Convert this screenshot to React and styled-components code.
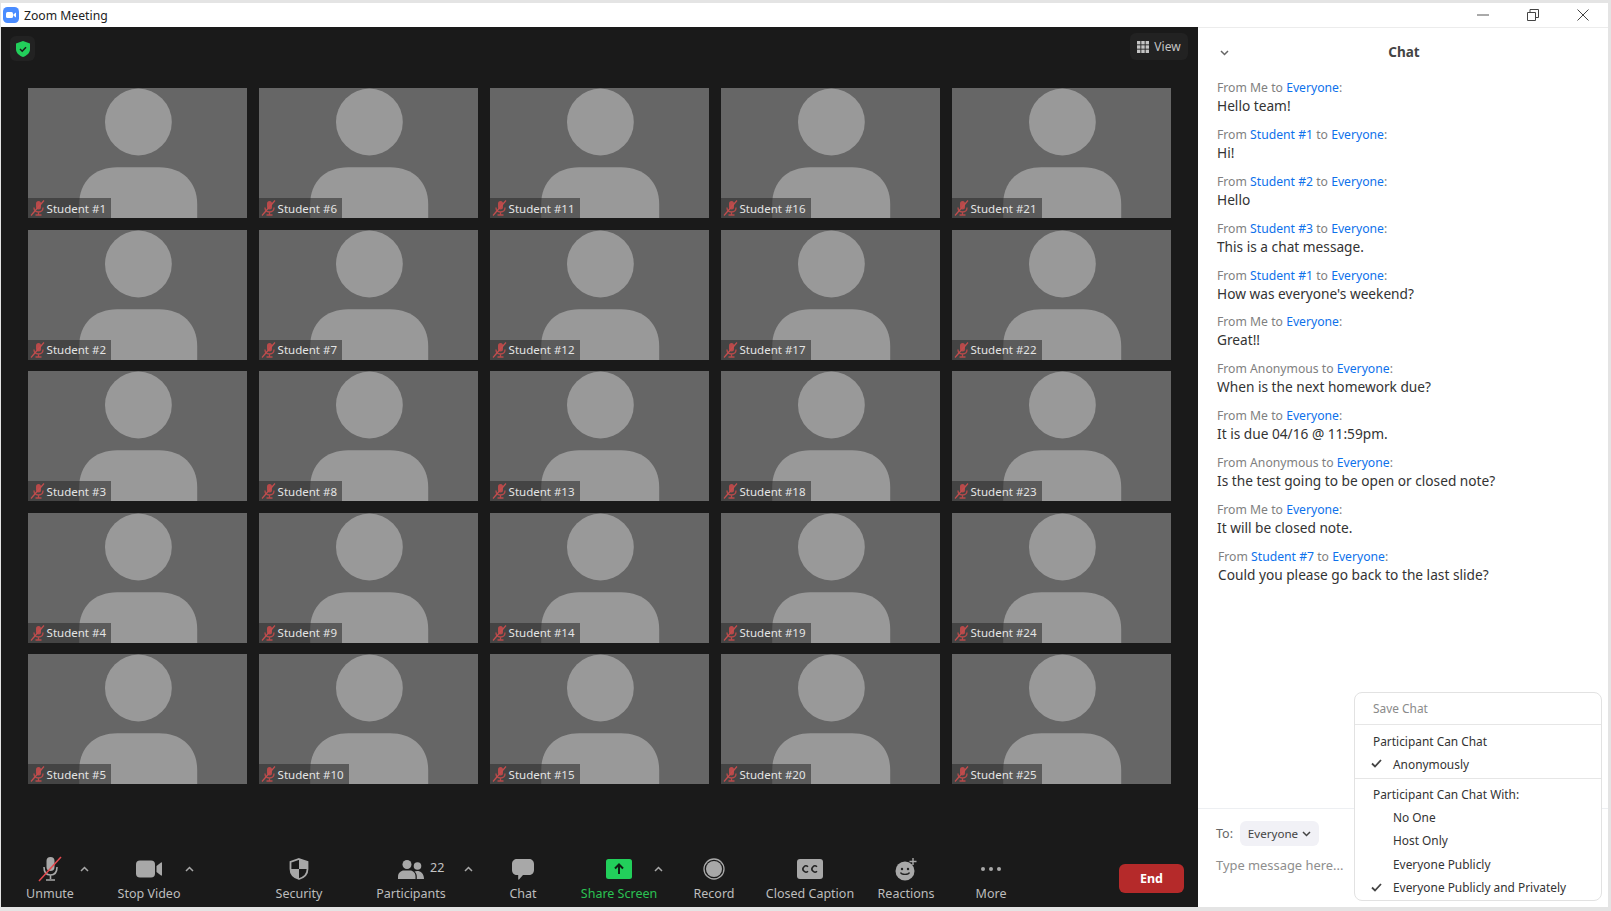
import React from 'react';
import styled, { createGlobalStyle } from 'styled-components';

const GlobalStyle = createGlobalStyle`
  html, body {
    margin: 0;
    padding: 0;
    background: #e6e6e6;
  }
  body {
    font-family: "Noto Sans", "Liberation Sans", sans-serif;
  }
`;

const Window = styled.div`
  width: 1611px;
  height: 911px;
  box-sizing: border-box;
  padding: 3px 3px 4px 1px;
  display: flex;
  flex-direction: column;
  background: #e4e4e4;
  overflow: hidden;
`;

const TitleBar = styled.header`
  height: 24px;
  flex: none;
  display: flex;
  align-items: center;
  background: #fff;
  padding-left: 2px;
  color: #222;
  font-size: 12.2px;
`;

const TitleText = styled.span`
  flex: 1;
  margin-left: 5px;
`;

const WindowControl = styled.span`
  width: 50px;
  height: 24px;
  display: flex;
  align-items: center;
  justify-content: center;
`;

const Body = styled.div`
  flex: 1;
  min-height: 0;
  display: flex;
`;

const Stage = styled.main`
  width: 1197px;
  flex: none;
  display: flex;
  flex-direction: column;
  background: #1a1a1a;
`;

const StageTop = styled.div`
  height: 61px;
  flex: none;
  box-sizing: border-box;
  padding: 6px 10px 0 9px;
  display: flex;
  justify-content: space-between;
  align-items: flex-start;
`;

const ShieldBadge = styled.div`
  width: 25px;
  height: 25px;
  margin-top: 3px;
  border-radius: 6px;
  background: #222;
  display: flex;
  align-items: center;
  justify-content: center;
`;

const ViewButton = styled.div`
  height: 27px;
  width: 58px;
  box-sizing: border-box;
  border-radius: 6px;
  background: #222;
  color: #c4c4c4;
  font-size: 12px;
  display: flex;
  align-items: center;
  justify-content: center;
  gap: 5px;
`;

const TileGrid = styled.section`
  margin-left: 26.6px;
  display: grid;
  grid-auto-flow: column;
  grid-template-columns: repeat(5, 219.3px);
  grid-template-rows: repeat(5, 130px);
  column-gap: 11.7px;
  row-gap: 11.6px;
`;

const Tile = styled.div`
  position: relative;
  background: #666;
  overflow: hidden;
`;

const Avatar = styled.svg`
  display: block;
  width: 100%;
  height: 100%;
`;

const NameTag = styled.div`
  position: absolute;
  left: 0;
  bottom: 0;
  height: 20px;
  box-sizing: border-box;
  padding: 0 5px 0 2px;
  display: flex;
  align-items: center;
  gap: 2px;
  background: rgba(40, 40, 40, 0.55);
  color: #e4e4e4;
  font-size: 11.5px;
  white-space: nowrap;
`;

const Toolbar = styled.footer`
  margin-top: auto;
  height: 50px;
  flex: none;
  display: flex;
  align-items: flex-start;
  padding-left: 21px;
`;

const ToolButton = styled.div`
  position: relative;
  flex: none;
  width: ${(p) => p.$width}px;
  margin-left: ${(p) => p.$offset || 0}px;
  height: 50px;
  display: flex;
  flex-direction: column;
  align-items: center;
  color: ${(p) => (p.$active ? '#2bc253' : '#bdbdbd')};
  font-size: 12.5px;
  white-space: nowrap;
`;

const ToolIcon = styled.div`
  height: 26px;
  margin-top: -1px;
  display: flex;
  align-items: center;
  justify-content: center;
`;

const ToolLabel = styled.span`
  line-height: 16px;
  margin-top: 4px;
`;

const Count = styled.span`
  position: absolute;
  left: 57px;
  top: 2px;
  line-height: 18px;
  font-size: 12.5px;
  color: #c4c4c4;
`;

const Caret = styled.div`
  flex: none;
  width: 12px;
  height: 26px;
  margin-top: -1px;
  margin-left: ${(p) => p.$offset || 0}px;
  display: flex;
  align-items: center;
  justify-content: center;
`;

const EndButton = styled.div`
  margin: 7px 14px 0 auto;
  width: 65px;
  height: 29px;
  border-radius: 6px;
  background: #b52a2a;
  color: #fff;
  font-size: 12.5px;
  font-weight: 700;
  display: flex;
  align-items: center;
  justify-content: center;
`;

const ChatPanel = styled.aside`
  position: relative;
  flex: 1;
  background: #fff;
  display: flex;
  flex-direction: column;
  border-top: 1px solid #ececec;
`;

const ChatHeader = styled.div`
  height: 50px;
  flex: none;
  position: relative;
  display: flex;
  align-items: center;
  justify-content: center;
  box-sizing: border-box;
  padding: 0 0 2px 2px;
  font-size: 13.5px;
  font-weight: 700;
  color: #444;
`;

const ChatChevron = styled.span`
  position: absolute;
  left: 22px;
  top: 22px;
  display: flex;
`;

const MessageList = styled.div`
  flex: 1;
  padding-left: 19px;
  display: flex;
  flex-direction: column;
`;

const Message = styled.div`
  height: 46.9px;
  padding-left: ${(p) => (p.$nudge ? 1 : 0)}px;
`;

const FromLine = styled.div`
  font-size: 12.2px;
  line-height: 19px;
  color: #7f7f7f;
`;

const Blue = styled.span`
  color: #0e71eb;
`;

const MessageText = styled.div`
  margin-top: -1px;
  font-size: 13.7px;
  line-height: 19px;
  color: #333;
`;

const Composer = styled.div`
  height: 99px;
  flex: none;
  box-sizing: border-box;
  border-top: 1px solid #edeff2;
  padding: 12px 0 0 18px;
  display: flex;
  flex-direction: column;
  gap: 9px;
`;

const RecipientRow = styled.div`
  display: flex;
  align-items: center;
  gap: 7px;
  font-size: 12.5px;
  color: #666;
`;

const RecipientPill = styled.div`
  height: 25px;
  width: 79px;
  box-sizing: border-box;
  border-radius: 6px;
  background: #f1f1f6;
  color: #444;
  font-size: 11.6px;
  display: flex;
  align-items: center;
  justify-content: center;
  gap: 4px;
`;

const Placeholder = styled.div`
  font-size: 12.9px;
  line-height: 20px;
  color: #8e8e8e;
`;

const Menu = styled.div`
  position: absolute;
  left: 156px;
  top: 664px;
  width: 248px;
  height: 209px;
  box-sizing: border-box;
  background: #fff;
  border: 1px solid #e2e2e2;
  border-radius: 8px;
  color: #333;
  font-size: 11.9px;
`;

const MenuSection = styled.div`
  height: ${(p) => p.$height}px;
  box-sizing: border-box;
  padding-top: ${(p) => p.$pad}px;
  border-bottom: ${(p) => (p.$last ? 'none' : '1px solid #e6e6e6')};
`;

const MenuItem = styled.div`
  height: 23.4px;
  display: flex;
  align-items: center;
  padding-left: ${(p) => (p.$indent ? 38 : 18)}px;
  color: ${(p) => (p.$muted ? '#8a8a8a' : '#333')};
  position: relative;
`;

const MenuCheck = styled.span`
  position: absolute;
  left: 16px;
  top: 7px;
  display: flex;
`;

const MutedMic = () => (
  <svg width="15" height="16" viewBox="0 0 15 16">
    <rect x="6" y="1" width="5" height="8.500" rx="2.500" fill="#b84a4a" />
    <path d="M4 7.500c0 3 2 4.500 4.500 4.500S13 10.500 13 7.500M8.500 12v2.500M5.500 15h6" fill="none" stroke="#b84a4a" strokeWidth="1.300" />
    <path d="M14 0.500 1 15.500" stroke="#c24e4e" strokeWidth="1.200" />
  </svg>
);

const AvatarPicture = () => (
  <Avatar viewBox="0 0 219.3 130" preserveAspectRatio="none">
    <circle cx="110.400" cy="34" r="33.400" fill="#999" />
    <path d="M51.200 130v-14c0-22 15-36.700 38-36.700h42c23 0 38 14.700 38 36.700v14z" fill="#999" />
  </Avatar>
);

const CaretIcon = () => (
  <svg width="9" height="6" viewBox="0 0 9 6">
    <path d="M1 5 4.500 1.500 8 5" fill="none" stroke="#a8a8a8" strokeWidth="1.500" />
  </svg>
);

const MicIcon = () => (
  <svg width="28" height="26" viewBox="0 0 28 26">
    <rect x="10.500" y="1" width="8" height="14" rx="4" fill="#a8a8a8" />
    <path d="M8 11c0 5 2.500 8 6.500 8s6.500-3 6.500-8M14.500 19v4M10 24h9" fill="none" stroke="#a8a8a8" strokeWidth="1.600" />
    <path d="M25 1 3 25" stroke="#e5484d" strokeWidth="1.500" />
  </svg>
);

const VideoIcon = () => (
  <svg width="26" height="18" viewBox="0 0 26 18">
    <rect x="0" y="0.500" width="19" height="17" rx="4" fill="#a8a8a8" />
    <path d="M20.500 6 25 2.500c.4-.3 1-.1 1 .5v12c0 .6-.6.8-1 .5L20.500 12z" fill="#a8a8a8" />
  </svg>
);

const SecurityIcon = () => (
  <svg width="20" height="22" viewBox="0 0 20 22">
    <path d="M10 1 18.500 4v7c0 5-3.500 8.500-8.500 10C5 19.500 1.500 16 1.500 11V4z" fill="none" stroke="#a8a8a8" strokeWidth="1.800" />
    <path d="M10 1 18.500 4v7H10zM10 11H1.500c0 5 3.500 8.500 8.500 10z" fill="#a8a8a8" />
  </svg>
);

const ParticipantsIcon = () => (
  <svg width="26" height="19" viewBox="0 0 26 19">
    <circle cx="9" cy="4.500" r="4.500" fill="#a8a8a8" />
    <circle cx="19.500" cy="6" r="3.800" fill="#a8a8a8" />
    <path d="M0 19v-2.500C0 13 3 10.500 6 10.500h6c3 0 5.500 2.500 5.500 6V19z" fill="#a8a8a8" />
    <path d="M18.800 19v-2.500c0-2-.8-4-2.300-5 .8-.3 1.700-.5 2.700-.5 3.500 0 6.800 2.500 6.800 8z" fill="#a8a8a8" />
  </svg>
);

const ChatIcon = () => (
  <svg width="22" height="21" viewBox="0 0 22 21">
    <path d="M5 0h12c2.800 0 5 2 5 5v6c0 3-2.200 5-5 5h-6l-4 4.500c-.3.300-.8.100-.8-.3V16H5c-2.800 0-5-2-5-5V5c0-3 2.200-5 5-5z" fill="#a8a8a8" />
  </svg>
);

const ShareIcon = () => (
  <svg width="26" height="20" viewBox="0 0 26 20">
    <rect width="26" height="20" rx="2.500" fill="#22cf5b" />
    <path d="M13 15V6M9 9.500 13 5.500l4 4" fill="none" stroke="#0f1f14" strokeWidth="2" />
  </svg>
);

const RecordIcon = () => (
  <svg width="22" height="22" viewBox="0 0 22 22">
    <circle cx="11" cy="11" r="10" fill="none" stroke="#a8a8a8" strokeWidth="1.300" />
    <circle cx="11" cy="11" r="8" fill="#a8a8a8" />
  </svg>
);

const CaptionIcon = () => (
  <svg width="26" height="20" viewBox="0 0 26 20">
    <rect width="26" height="20" rx="3" fill="#a8a8a8" />
    <path d="M11 7.800a3 3 0 1 0 0 4.400M20 7.800a3 3 0 1 0 0 4.400" fill="none" stroke="#222" strokeWidth="1.500" />
  </svg>
);

const ReactionIcon = () => (
  <svg width="22" height="24" viewBox="0 0 22 24">
    <circle cx="10" cy="14" r="9.500" fill="#a8a8a8" />
    <circle cx="7" cy="12" r="1.200" fill="#222" />
    <circle cx="13" cy="12" r="1.200" fill="#222" />
    <path d="M5.500 15.500c1 2.500 8 2.500 9 0" fill="none" stroke="#222" strokeWidth="1.300" />
    <path d="M18 1v7M14.500 4.500h7" stroke="#a8a8a8" strokeWidth="1.400" />
  </svg>
);

const MoreIcon = () => (
  <svg width="22" height="6" viewBox="0 0 22 6">
    <circle cx="3" cy="3" r="2" fill="#a8a8a8" />
    <circle cx="11" cy="3" r="2" fill="#a8a8a8" />
    <circle cx="19" cy="3" r="2" fill="#a8a8a8" />
  </svg>
);

const Check = () => (
  <svg width="11" height="9" viewBox="0 0 11 9">
    <path d="M1 4.500 4 7.500 10 1" fill="none" stroke="#444" strokeWidth="1.800" />
  </svg>
);

const Down = ({ color = '#444' }) => (
  <svg width="9" height="6" viewBox="0 0 9 6">
    <path d="M1 1 4.500 4.500 8 1" fill="none" stroke={color} strokeWidth="1.500" />
  </svg>
);

const students = Array.from({ length: 25 }, (_, i) => `Student #${i + 1}`);

const messages = [
  { from: 'Me', text: 'Hello team!' },
  { from: 'Student #1', link: true, text: 'Hi!' },
  { from: 'Student #2', link: true, text: 'Hello' },
  { from: 'Student #3', link: true, text: 'This is a chat message.' },
  { from: 'Student #1', link: true, text: "How was everyone's weekend?" },
  { from: 'Me', text: 'Great!!' },
  { from: 'Anonymous', text: 'When is the next homework due?' },
  { from: 'Me', text: 'It is due 04/16 @ 11:59pm.' },
  { from: 'Anonymous', text: 'Is the test going to be open or closed note?' },
  { from: 'Me', text: 'It will be closed note.' },
  { from: 'Student #7', link: true, nudge: true, text: 'Could you please go back to the last slide?' },
];

const App = () => {
  return (
    <Window>
      <GlobalStyle />
      <TitleBar>
        <svg width="16" height="16" viewBox="0 0 16 16">
          <rect width="16" height="16" rx="4.500" fill="#4a8cff" />
          <rect x="3" y="5" width="7" height="6" rx="1.500" fill="#fff" />
          <path d="M10.500 7.300 13 5.500v5l-2.500-1.800z" fill="#fff" />
        </svg>
        <TitleText>Zoom Meeting</TitleText>
        <WindowControl>
          <svg width="12" height="2" viewBox="0 0 12 2"><path d="M0 1h12" stroke="#555" /></svg>
        </WindowControl>
        <WindowControl>
          <svg width="12" height="12" viewBox="0 0 12 12">
            <path d="M.5 3.500h8v8h-8zM3 3.500V.500h8.500v8H8.500" fill="none" stroke="#444" />
          </svg>
        </WindowControl>
        <WindowControl>
          <svg width="12" height="12" viewBox="0 0 12 12"><path d="M.5.500l11 11M11.500.500l-11 11" stroke="#444" /></svg>
        </WindowControl>
      </TitleBar>
      <Body>
        <Stage>
          <StageTop>
            <ShieldBadge>
              <svg width="14" height="16" viewBox="0 0 14 16">
                <path d="M7 0l7 2.500v5.500c0 4-3 6.500-7 8-4-1.500-7-4-7-8V2.500z" fill="#22cf5b" />
                <path d="M4 8l2.200 2.200L10 6.200" fill="none" stroke="#1a1a1a" strokeWidth="1.500" />
              </svg>
            </ShieldBadge>
            <ViewButton>
              <svg width="12" height="12" viewBox="0 0 12 12" fill="#c4c4c4">
                {[0, 4.300, 8.600].map((y) =>
                  [0, 4.300, 8.600].map((x) => <rect key={`${x}-${y}`} x={x} y={y} width="3.400" height="3.400" />)
                )}
              </svg>
              View
            </ViewButton>
          </StageTop>
          <TileGrid>
            {students.map((name) => (
              <Tile key={name}>
                <AvatarPicture />
                <NameTag>
                  <MutedMic />
                  {name}
                </NameTag>
              </Tile>
            ))}
          </TileGrid>
          <Toolbar>
            <ToolButton $width={56}>
              <ToolIcon><MicIcon /></ToolIcon>
              <ToolLabel>Unmute</ToolLabel>
            </ToolButton>
            <Caret><CaretIcon /></Caret>
            <ToolButton $width={68} $offset={25}>
              <ToolIcon><VideoIcon /></ToolIcon>
              <ToolLabel>Stop Video</ToolLabel>
            </ToolButton>
            <Caret><CaretIcon /></Caret>
            <ToolButton $width={56} $offset={76}>
              <ToolIcon><SecurityIcon /></ToolIcon>
              <ToolLabel>Security</ToolLabel>
            </ToolButton>
            <ToolButton $width={76} $offset={46}>
              <ToolIcon><ParticipantsIcon /></ToolIcon>
              <ToolLabel>Participants</ToolLabel>
              <Count>22</Count>
            </ToolButton>
            <Caret $offset={13}><CaretIcon /></Caret>
            <ToolButton $width={40} $offset={29}>
              <ToolIcon><ChatIcon /></ToolIcon>
              <ToolLabel>Chat</ToolLabel>
            </ToolButton>
            <ToolButton $width={76} $offset={38} $active>
              <ToolIcon><ShareIcon /></ToolIcon>
              <ToolLabel>Share Screen</ToolLabel>
            </ToolButton>
            <Caret $offset={-5}><CaretIcon /></Caret>
            <ToolButton $width={50} $offset={25}>
              <ToolIcon><RecordIcon /></ToolIcon>
              <ToolLabel>Record</ToolLabel>
            </ToolButton>
            <ToolButton $width={92} $offset={25}>
              <ToolIcon><CaptionIcon /></ToolIcon>
              <ToolLabel>Closed Caption</ToolLabel>
            </ToolButton>
            <ToolButton $width={60} $offset={20}>
              <ToolIcon><ReactionIcon /></ToolIcon>
              <ToolLabel>Reactions</ToolLabel>
            </ToolButton>
            <ToolButton $width={40} $offset={35}>
              <ToolIcon><MoreIcon /></ToolIcon>
              <ToolLabel>More</ToolLabel>
            </ToolButton>
            <EndButton>End</EndButton>
          </Toolbar>
        </Stage>
        <ChatPanel>
          <ChatHeader>
            <ChatChevron><Down color="#666" /></ChatChevron>
            Chat
          </ChatHeader>
          <MessageList>
            {messages.map((m, i) => (
              <Message key={i} $nudge={m.nudge}>
                <FromLine>
                  From {m.link ? <Blue>{m.from}</Blue> : m.from} to <Blue>Everyone</Blue>:
                </FromLine>
                <MessageText>{m.text}</MessageText>
              </Message>
            ))}
          </MessageList>
          <Composer>
            <RecipientRow>
              To:
              <RecipientPill>Everyone <Down /></RecipientPill>
            </RecipientRow>
            <Placeholder>Type message here...</Placeholder>
          </Composer>
          <Menu>
            <MenuSection $height={32} $pad={3}>
              <MenuItem $muted>Save Chat</MenuItem>
            </MenuSection>
            <MenuSection $height={54} $pad={4}>
              <MenuItem>Participant Can Chat</MenuItem>
              <MenuItem $indent><MenuCheck><Check /></MenuCheck>Anonymously</MenuItem>
            </MenuSection>
            <MenuSection $height={121} $pad={3} $last>
              <MenuItem>Participant Can Chat With:</MenuItem>
              <MenuItem $indent>No One</MenuItem>
              <MenuItem $indent>Host Only</MenuItem>
              <MenuItem $indent>Everyone Publicly</MenuItem>
              <MenuItem $indent><MenuCheck><Check /></MenuCheck>Everyone Publicly and Privately</MenuItem>
            </MenuSection>
          </Menu>
        </ChatPanel>
      </Body>
    </Window>
  );
};

export default App;
